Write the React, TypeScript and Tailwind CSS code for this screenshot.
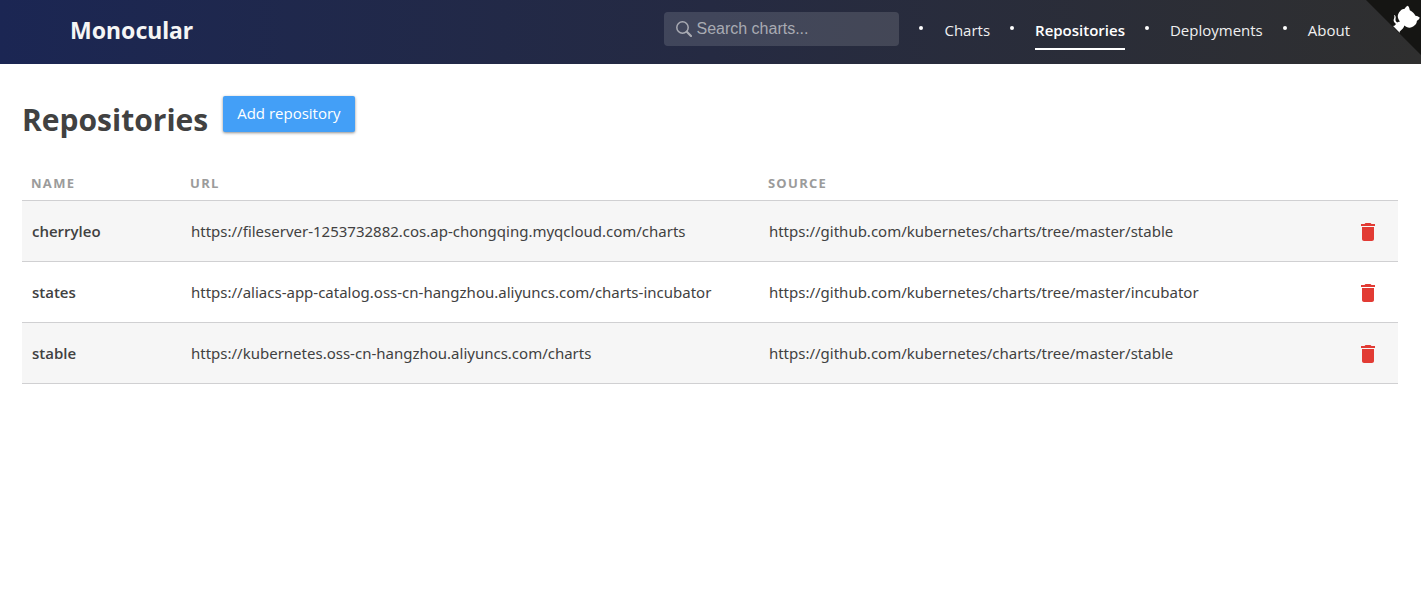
import { useState } from "react";

const links = ["Charts", "Repositories", "Deployments", "About"];

const repositories = [
  {
    name: "cherryleo",
    url: "https://fileserver-1253732882.cos.ap-chongqing.myqcloud.com/charts",
    source: "https://github.com/kubernetes/charts/tree/master/stable",
  },
  {
    name: "states",
    url: "https://aliacs-app-catalog.oss-cn-hangzhou.aliyuncs.com/charts-incubator",
    source: "https://github.com/kubernetes/charts/tree/master/incubator",
  },
  {
    name: "stable",
    url: "https://kubernetes.oss-cn-hangzhou.aliyuncs.com/charts",
    source: "https://github.com/kubernetes/charts/tree/master/stable",
  },
];

function SearchIcon() {
  return (
    <svg className="size-4 shrink-0" viewBox="0 0 16 16" fill="none" stroke="currentColor" aria-hidden="true">
      <circle cx="6.5" cy="6.5" r="5.7" strokeWidth="1.5" />
      <path d="M10.8 10.8L15 15" strokeWidth="2.2" strokeLinecap="round" />
    </svg>
  );
}

function TrashIcon() {
  return (
    <svg className="size-6" viewBox="0 0 24 24" fill="currentColor" aria-hidden="true">
      <path d="M6 19c0 1.1.9 2 2 2h8c1.1 0 2-.9 2-2V7H6v12zM19 4h-3.500l-1-1h-5l-1 1H5v2h14V4z" />
    </svg>
  );
}

function GitHubCorner() {
  return (
    <a href="#github" aria-label="View source on GitHub" className="absolute top-0 right-0">
      <svg className="size-[55px]" viewBox="11 20 207 207" aria-hidden="true">
        <path d="M11 20L218 227V20Z" fill="#151513" />
        <g fill="#fff" transform="translate(-3 2)">
          <path d="M128.3,109.0 C113.8,99.7 119.0,89.6 119.0,89.6 C122.0,82.7 120.5,78.6 120.5,78.6 C119.2,72.0 123.4,76.3 123.4,76.3 C127.3,80.9 125.5,87.3 125.5,87.3 C122.9,97.6 130.6,101.9 134.4,103.2" />
          <path d="M115.0,115.0 C114.9,115.1 118.7,116.5 119.8,115.4 L133.7,101.6 C136.9,99.2 139.9,98.4 142.2,98.6 C133.8,88.0 127.5,74.4 143.8,58.0 C148.5,53.4 154.0,51.2 159.7,51.0 C160.3,49.4 163.2,43.6 171.4,40.1 C171.4,40.1 176.1,42.5 178.8,56.2 C183.1,58.6 187.2,61.8 190.9,65.4 C194.5,69.0 197.7,73.2 200.1,77.6 C213.8,80.2 216.3,84.9 216.3,84.9 C212.7,93.1 206.9,96.0 205.4,96.6 C205.1,102.4 203.0,107.8 198.3,112.5 C181.9,128.9 168.3,122.5 157.7,114.1 C157.9,116.9 156.7,120.9 152.7,124.9 L141.0,136.5 C139.8,137.7 141.6,141.9 141.8,141.8 Z" />
        </g>
      </svg>
    </a>
  );
}

export default function App() {
  const [query, setQuery] = useState("");

  return (
    <div className="min-h-screen bg-white font-['Open_Sans','Noto_Sans',sans-serif] text-[#414141]">
      <header className="relative flex h-16 items-start justify-between bg-linear-to-r from-[#1b2653] via-[#252a42] to-[#2f2f2f] pr-[71px] pl-[70px]">
        <a href="#home" className="pt-3 font-['Noto_Sans',sans-serif] text-[23px] leading-9 font-bold text-[#f5f5f5]">
          Monocular
        </a>
        <div className="flex items-start pt-3">
          <label className="flex h-[34px] w-[235px] items-center gap-1 rounded bg-white/13 px-3 text-[#a9abb3]">
            <SearchIcon />
            <input
              type="text"
              aria-label="Search charts"
              placeholder="Search charts..."
              value={query}
              onChange={(e) => setQuery(e.target.value)}
              className="min-w-0 flex-1 bg-transparent font-['Liberation_Sans',sans-serif] text-base text-white outline-none placeholder:text-[#a9abb3]"
            />
          </label>
          <nav>
            <ul className="flex text-[15px] leading-9 text-[#f0f0f0]">
              {links.map((link) => (
                <li key={link} className="flex items-start">
                  <span className="mt-[14px] mr-[21px] ml-5 size-1 rounded-full bg-white" />
                  <a
                    href={"#" + link.toLowerCase()}
                    className={
                      link === "Repositories"
                        ? "border-b-2 border-white font-semibold text-white"
                        : "border-b-2 border-transparent"
                    }
                  >
                    {link}
                  </a>
                </li>
              ))}
            </ul>
          </nav>
        </div>
        <GitHubCorner />
      </header>

      <main className="pt-8 pr-[23px] pl-[22px]">
        <div className="flex items-start gap-[15px]">
          <h1 className="text-[30px] leading-12 font-bold">Repositories</h1>
          <button
            type="button"
            className="h-9 rounded-xs bg-[#439ff7] px-[14px] pb-0.5 text-[15px] font-medium text-white shadow-[0_1px_3px_rgba(0,0,0,0.45)]"
          >
            Add repository
          </button>
        </div>

        <table className="mt-6 w-full table-fixed border-collapse text-left">
          <thead>
            <tr className="h-8 border-b border-[#d0d0d2] text-[13px] tracking-widest text-[#9b9b9b] uppercase">
              <th className="w-[159px] pl-[9px] font-bold">Name</th>
              <th className="w-[42%] pl-[9px] font-bold">Url</th>
              <th className="pl-[9px] font-bold">Source</th>
              <th className="w-16" aria-label="Actions" />
            </tr>
          </thead>
          <tbody>
            {repositories.map((repo) => (
              <tr key={repo.name} className="h-[61px] border-b border-[#d0d0d2] text-[15px] odd:bg-[#f6f6f6]">
                <td className="pt-0.5 pl-[10px] font-semibold">{repo.name}</td>
                <td className="pt-0.5 pl-[10px] font-['Noto_Sans',sans-serif]">{repo.url}</td>
                <td className="pt-0.5 pl-[10px] font-['Noto_Sans',sans-serif]">{repo.source}</td>
                <td className="pt-0.5">
                  <button type="button" aria-label={"Delete " + repo.name} className="ml-[22px] block text-[#e23b34]">
                    <TrashIcon />
                  </button>
                </td>
              </tr>
            ))}
          </tbody>
        </table>
      </main>
    </div>
  );
}
